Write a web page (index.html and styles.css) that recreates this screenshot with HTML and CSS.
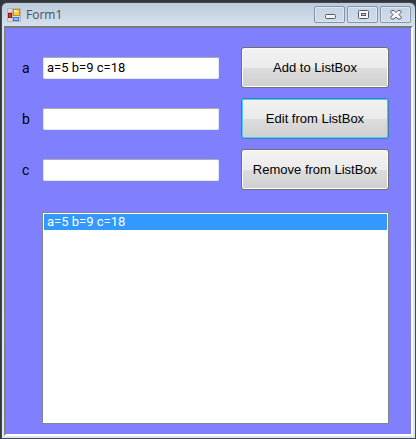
FILE: index.html
```html
<!DOCTYPE html>
<html lang="en">
<head>
  <meta charset="UTF-8" />
  <meta name="viewport" content="width=device-width, initial-scale=1" />
  <title>Form1</title>
  <link rel="stylesheet" href="styles.css">
</head>
<body>
  <div class="window">
    <header class="title-bar">
      <svg class="app-icon" width="14" height="14" viewBox="0 0 14 14" aria-hidden="true">
        <path d="M.5 .5h13v13H.5zM5.500 .5v13M.5 4.500h5M.5 9.500h13" fill="#d3dbe4" stroke="#b5b5b8" />
        <rect x="6.500" y="1.500" width="6" height="6" fill="#ffd03a" stroke="#c98a12" />
        <path d="M7 2h3v2H7z" fill="#fff0a0" />
        <rect x="1.500" y="5.500" width="3" height="4" fill="#e0392b" stroke="#a01010" />
        <rect x="6.500" y="9.500" width="5" height="3" fill="#8ebcf8" stroke="#3f78d8" />
      </svg>
      <h1>Form1</h1>
      <div class="window-buttons">
        <button type="button" aria-label="Minimize">
          <svg width="12" height="10" viewBox="0 0 12 10"><rect x="1.500" y="4.500" width="10" height="4" rx="1" fill="#f6f6f6" stroke="#50586a" /></svg>
        </button>
        <button type="button" aria-label="Maximize">
          <svg width="12" height="10" viewBox="0 0 12 10"><rect x="1.500" y=".5" width="10" height="8" rx="1" fill="#f6f6f6" stroke="#50586a" /><rect x="4.500" y="3.500" width="4" height="2" fill="#c3d2e2" stroke="#50586a" /></svg>
        </button>
        <button type="button" aria-label="Close">
          <svg width="12" height="10" viewBox="0 0 12 10"><path d="M1.500 .5h2.500L6 2.500 8 .5h2.500l1 1.500L9 4.500 11.500 7.500l-1 1.500H8L6 7 4 9H1.500l-1-1.500L3 4.500.5 2z" fill="#f6f6f6" stroke="#50586a" /></svg>
        </button>
      </div>
    </header>

    <main class="form">
      <div class="fields">
        <label for="inputA">a</label>
        <input type="text" id="inputA" value="a=5 b=9 c=18">
        <button type="button" class="btn">Add to ListBox</button>

        <label for="inputB">b</label>
        <input type="text" id="inputB">
        <button type="button" class="btn btn-active">Edit from ListBox</button>

        <label for="inputC">c</label>
        <input type="text" id="inputC">
        <button type="button" class="btn">Remove from ListBox</button>
      </div>

      <select class="list-box" size="10" aria-label="Items">
        <option class="selected">a=5 b=9 c=18</option>
      </select>
    </main>
  </div>
</body>
</html>
```
FILE: styles.css
```css
* {
  box-sizing: border-box;
}

body {
  margin: 0;
  padding: 2px 0 0 1px;
  background-color: #33363a;
  font-family: Roboto, Arial, sans-serif;
  font-size: 13px;
  color: #000;
}

.window {
  display: flex;
  flex-direction: column;
  min-height: calc(100vh - 2px);
  padding: 0 2px 2px;
  border: 1px solid #45484c;
  border-radius: 6px 6px 0 0;
  background: linear-gradient(#bccbdb, #d6e2ee 24px, #dbe8f4);
}

.title-bar {
  display: flex;
  align-items: center;
  height: 23px;
  padding: 0 2px 0 3px;
}

.app-icon {
  margin-right: 5px;
}

h1 {
  margin: 0;
  font-family: "Open Sans", "Noto Sans", sans-serif;
  font-size: 12px;
  font-weight: 400;
  color: #47505c;
}

.window-buttons {
  display: flex;
  gap: 2px;
  margin-left: auto;
}

.window-buttons button {
  display: flex;
  align-items: center;
  justify-content: center;
  width: 31px;
  height: 17px;
  padding: 0;
  border: 1px solid #8593ac;
  border-radius: 2px;
  background: linear-gradient(#c6d4e3, #d0dce9);
  box-shadow: inset 0 0 0 1px #dce6f0;
}

.form {
  display: flex;
  flex: 1;
  flex-direction: column;
  gap: 22px;
  padding: 19px 22px 10px 16px;
  border: 2px solid;
  border-color: #77777c #fff #fff #85857f;
  background-color: #8080ff;
}

.fields {
  display: grid;
  grid-template-columns: 21px 1fr 148px;
  grid-auto-rows: 41px;
  row-gap: 10px;
  align-items: center;
}

label {
  font-size: 14px;
}

input {
  width: calc(100% - 22px);
  height: 22px;
  padding: 0 3px;
  border: 1px solid #e3e9ef;
  border-top-color: #abadb3;
  border-radius: 2px;
  background-color: #fff;
  font: inherit;
}

.btn {
  height: 41px;
  padding: 0;
  border: 1px solid #707070;
  border-radius: 3px;
  background: linear-gradient(#f2f2f2, #ebebeb 50%, #dddddd 50%, #cfcfcf);
  box-shadow: inset 0 0 0 1px #fbfbfb;
  font-family: "Liberation Sans", Arial, sans-serif;
  font-size: 13px;
  color: #000;
}

.btn-active {
  border-color: #3c7fb1;
  box-shadow: inset 0 0 0 1px #48d0f0;
}

.list-box {
  flex: 1;
  min-height: 120px;
  margin-left: 20px;
  padding: 1px;
  border: 1px solid #828790;
  border-radius: 0;
  background-color: #fff;
  font: inherit;
  overflow: hidden;
  outline: none;
}

.list-box option {
  min-height: 16px;
  padding: 0 3px;
  line-height: 16px;
}

.list-box .selected {
  background-color: #3399ff;
  color: #fff;
}
```
